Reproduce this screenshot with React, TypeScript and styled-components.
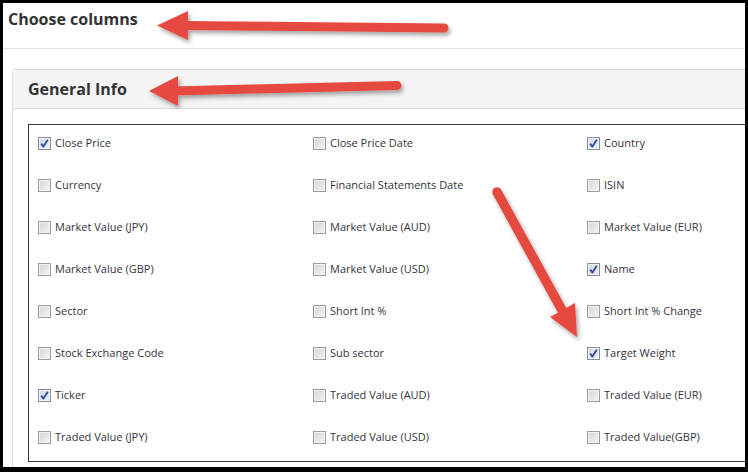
import React, { FunctionComponent } from "react";
import styled, { createGlobalStyle } from "styled-components";

const GlobalStyle = createGlobalStyle`
  html, body {
    margin: 0;
    padding: 0;
    background: #000;
  }
  * {
    box-sizing: border-box;
  }
`;

const Frame = styled.div`
  position: relative;
  width: 748px;
  height: 472px;
  background: #000;
  padding: 3px 3px 5px 3px;
  font-family: "Open Sans", "DejaVu Sans", sans-serif;
`;

const Sheet = styled.div`
  width: 742px;
  height: 464px;
  background: #fff;
  overflow: hidden;
`;

const TitleBar = styled.div`
  height: 46px;
  padding: 5px 5px 0 5px;
  border-bottom: 1px solid #e4e4e4;
`;

const Heading = styled.h2`
  margin: 0;
  font-size: 16px;
  line-height: 22px;
  font-weight: 700;
  color: #333;
`;

const Panel = styled.div`
  width: 780px;
  margin: 20px 0 0 9px;
  border: 1px solid #dcdcdc;
  border-radius: 3px;
`;

const PanelHeader = styled.div`
  height: 39px;
  padding: 8px 15px 0 15px;
  background: #f4f4f4;
  border-bottom: 1px solid #dcdcdc;
`;

const PanelBody = styled.div`
  padding: 15px 0 0 15px;
  height: 400px;
`;

const OptionBox = styled.div`
  border: 1px solid #3c3c3c;
  display: grid;
  grid-template-columns: 275px 274px 1fr;
  grid-auto-rows: 20px;
  row-gap: 22px;
  padding: 8px 0 14px 9px;
`;

const Option = styled.label`
  display: flex;
  align-items: center;
  gap: 4px;
  font-size: 11px;
  line-height: 20px;
  color: #343440;
  white-space: nowrap;
`;

const Box = styled.span<{ $checked: boolean }>`
  width: 13px;
  height: 13px;
  flex: none;
  display: flex;
  align-items: center;
  justify-content: center;
  border: 1px solid ${(p) => (p.$checked ? "#878ea2" : "#9c9c9c")};
  background: ${(p) =>
    p.$checked
      ? "linear-gradient(135deg, #d2d7e4 0%, #eceef4 100%)"
      : "linear-gradient(135deg, #d6d6d6 0%, #f4f4f4 100%)"};
  box-shadow: inset 0 0 0 1px ${(p) => (p.$checked ? "#f2f4f8" : "#f2f2f2")};
`;

const Overlay = styled.svg`
  position: absolute;
  left: 0;
  top: 0;
  pointer-events: none;
`;

interface IColumn {
  label: string;
  checked?: boolean;
}

const COLUMNS: IColumn[] = [
  { label: "Close Price", checked: true },
  { label: "Close Price Date" },
  { label: "Country", checked: true },
  { label: "Currency" },
  { label: "Financial Statements Date" },
  { label: "ISIN" },
  { label: "Market Value (JPY)" },
  { label: "Market Value (AUD)" },
  { label: "Market Value (EUR)" },
  { label: "Market Value (GBP)" },
  { label: "Market Value (USD)" },
  { label: "Name", checked: true },
  { label: "Sector" },
  { label: "Short Int %" },
  { label: "Short Int % Change" },
  { label: "Stock Exchange Code" },
  { label: "Sub sector" },
  { label: "Target Weight", checked: true },
  { label: "Ticker", checked: true },
  { label: "Traded Value (AUD)" },
  { label: "Traded Value (EUR)" },
  { label: "Traded Value (JPY)" },
  { label: "Traded Value (USD)" },
  { label: "Traded Value(GBP)" },
];

const CheckBox: FunctionComponent<{ checked: boolean }> = ({ checked }) => (
  <Box $checked={checked}>
    {checked && (
      <svg width="9" height="9" viewBox="0 0 9 9">
        <path d="M1.2 4.6 L3.4 7.6 L7.8 0.8" fill="none" stroke="#2b4c9e" strokeWidth="1.8" strokeLinejoin="round" />
      </svg>
    )}
  </Box>
);

const RED = "#e5483f";

const Arrows = () => (
  <Overlay width="748" height="472" viewBox="0 0 748 472">
    <defs>
      <filter id="shadow" x="-20%" y="-20%" width="140%" height="140%">
        <feDropShadow dx="2" dy="3" stdDeviation="2" floodColor="#000" floodOpacity="0.35" />
      </filter>
    </defs>
    <g filter="url(#shadow)" fill={RED} stroke={RED}>
      <line x1="444" y1="28" x2="182" y2="25.5" strokeWidth="9" strokeLinecap="round" />
      <polygon points="157,25.5 188,11 188,40" stroke="none" />
      <line x1="397" y1="85.5" x2="172" y2="91" strokeWidth="9" strokeLinecap="round" />
      <polygon points="149,91 178,76 178,106" stroke="none" />
      <line x1="497" y1="192" x2="563" y2="312" strokeWidth="9.5" strokeLinecap="round" />
      <polygon points="577,337 550,317 575,303" stroke="none" />
    </g>
  </Overlay>
);

export default function App() {
  return (
    <Frame>
      <GlobalStyle />
      <Sheet>
        <TitleBar>
          <Heading>Choose columns</Heading>
        </TitleBar>
        <Panel>
          <PanelHeader>
            <Heading>General Info</Heading>
          </PanelHeader>
          <PanelBody>
            <OptionBox>
              {COLUMNS.map((col) => (
                <Option key={col.label}>
                  <CheckBox checked={!!col.checked} />
                  {col.label}
                </Option>
              ))}
            </OptionBox>
          </PanelBody>
        </Panel>
      </Sheet>
      <Arrows />
    </Frame>
  );
}
